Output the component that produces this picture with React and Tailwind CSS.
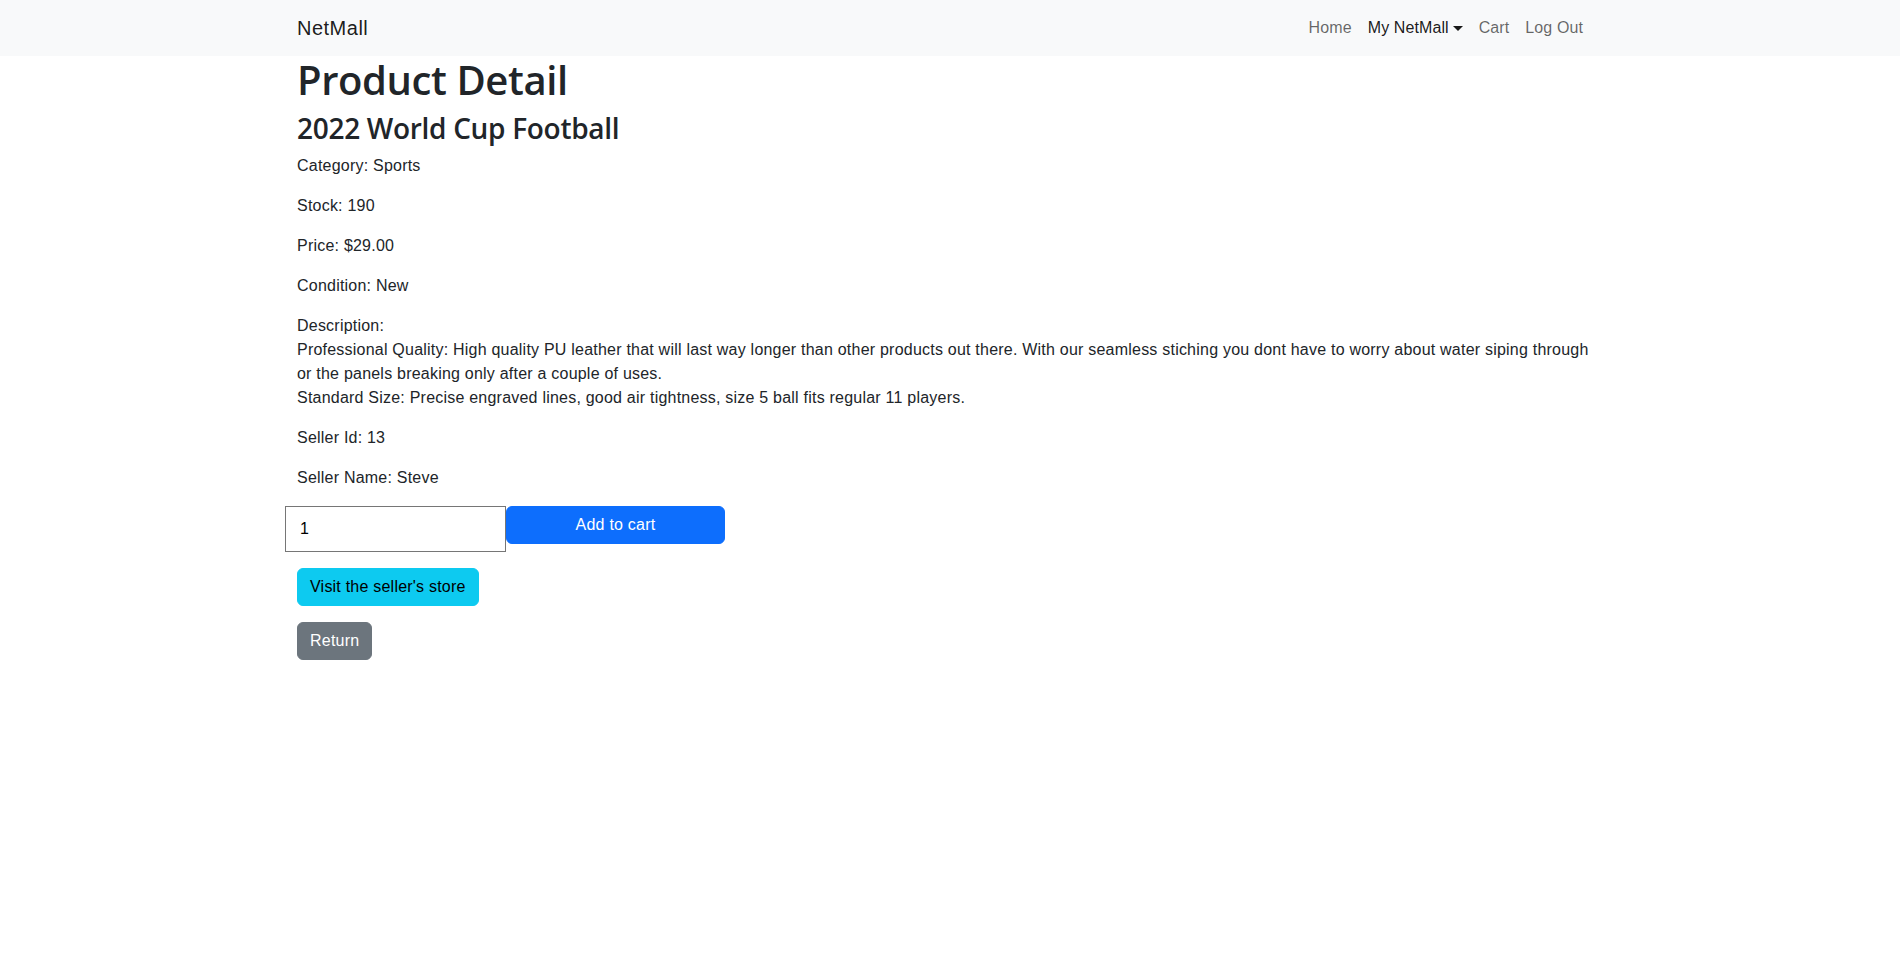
import React from "react";

export default function App() {
  const body = "font-['Liberation_Sans',Arial,sans-serif]";
  const head = "font-['Open_Sans','Liberation_Sans',sans-serif]";
  return (
    <div className={`${body} text-base text-[#212529] bg-white min-h-[957px] tracking-[0.22px]`}>
      <nav className="bg-[#f8f9fa] h-[56px] py-2">
        <div className="mx-auto w-[1330px] px-3 flex items-center justify-between h-[40px]">
          <span className="text-xl leading-[30px] py-[5px] text-black/90 tracking-[0.5px]">NetMall</span>
          <ul className="flex items-center mr-3 tracking-[0.1px]">
            <li><a className="block px-2 py-2 leading-6 text-black/60">Home</a></li>
            <li>
              <a className="flex items-center px-2 py-2 leading-6 text-black/90">
                My NetMall
                <span className="ml-[4px] w-0 h-0 border-t-[5px] border-t-current border-x-[5px] border-x-transparent mt-[1px]"></span>
              </a>
            </li>
            <li><a className="block px-2 py-2 leading-6 text-black/60">Cart</a></li>
            <li><a className="block px-2 py-2 leading-6 text-black/60">Log Out</a></li>
          </ul>
        </div>
      </nav>
      <main className="mx-auto w-[1330px] px-3">
        <h1 className={`${head} text-[40px] leading-[48px] font-semibold tracking-[-0.4px] mb-2`}>Product Detail</h1>
        <h3 className={`${head} text-[28px] leading-[33.6px] font-semibold tracking-[-0.3px] mb-2`}>2022 World Cup Football</h3>
        <p className="leading-6 mb-4">Category: Sports</p>
        <p className="leading-6 mb-4">Stock: 190</p>
        <p className="leading-6 mb-4">Price: $29.00</p>
        <p className="leading-6 mb-4">Condition: New</p>
        <p className="leading-6 mb-4">
          Description:
          <br />
          Professional Quality: High quality PU leather that will last way longer than other products out there. With our seamless stiching you dont have to worry about water siping through or the panels breaking only after a couple of uses.
          <br />
          Standard Size: Precise engraved lines, good air tightness, size 5 ball fits regular 11 players.
        </p>
        <p className="leading-6 mb-4">Seller Id: 13</p>
        <p className="leading-6 mb-4">Seller Name: Steve</p>
        <div className="flex items-start -mx-3 mb-4">
          <input
            type="text"
            defaultValue="1"
            className="w-[221px] h-[46px] border border-[#767676] px-[14px] text-base text-black outline-none"
          />
          <button className="w-[219px] h-[38px] rounded-md bg-[#0d6efd] text-white leading-6 border border-[#0d6efd]">
            Add to cart
          </button>
        </div>
        <div className="mb-4">
          <button className="h-[38px] rounded-md bg-[#0dcaf0] border border-[#0dcaf0] text-black px-[12px] leading-6">
            Visit the seller's store
          </button>
        </div>
        <div>
          <button className="h-[38px] rounded-md bg-[#6c757d] border border-[#6c757d] text-white px-[12px] leading-6">
            Return
          </button>
        </div>
      </main>
    </div>
  );
}
